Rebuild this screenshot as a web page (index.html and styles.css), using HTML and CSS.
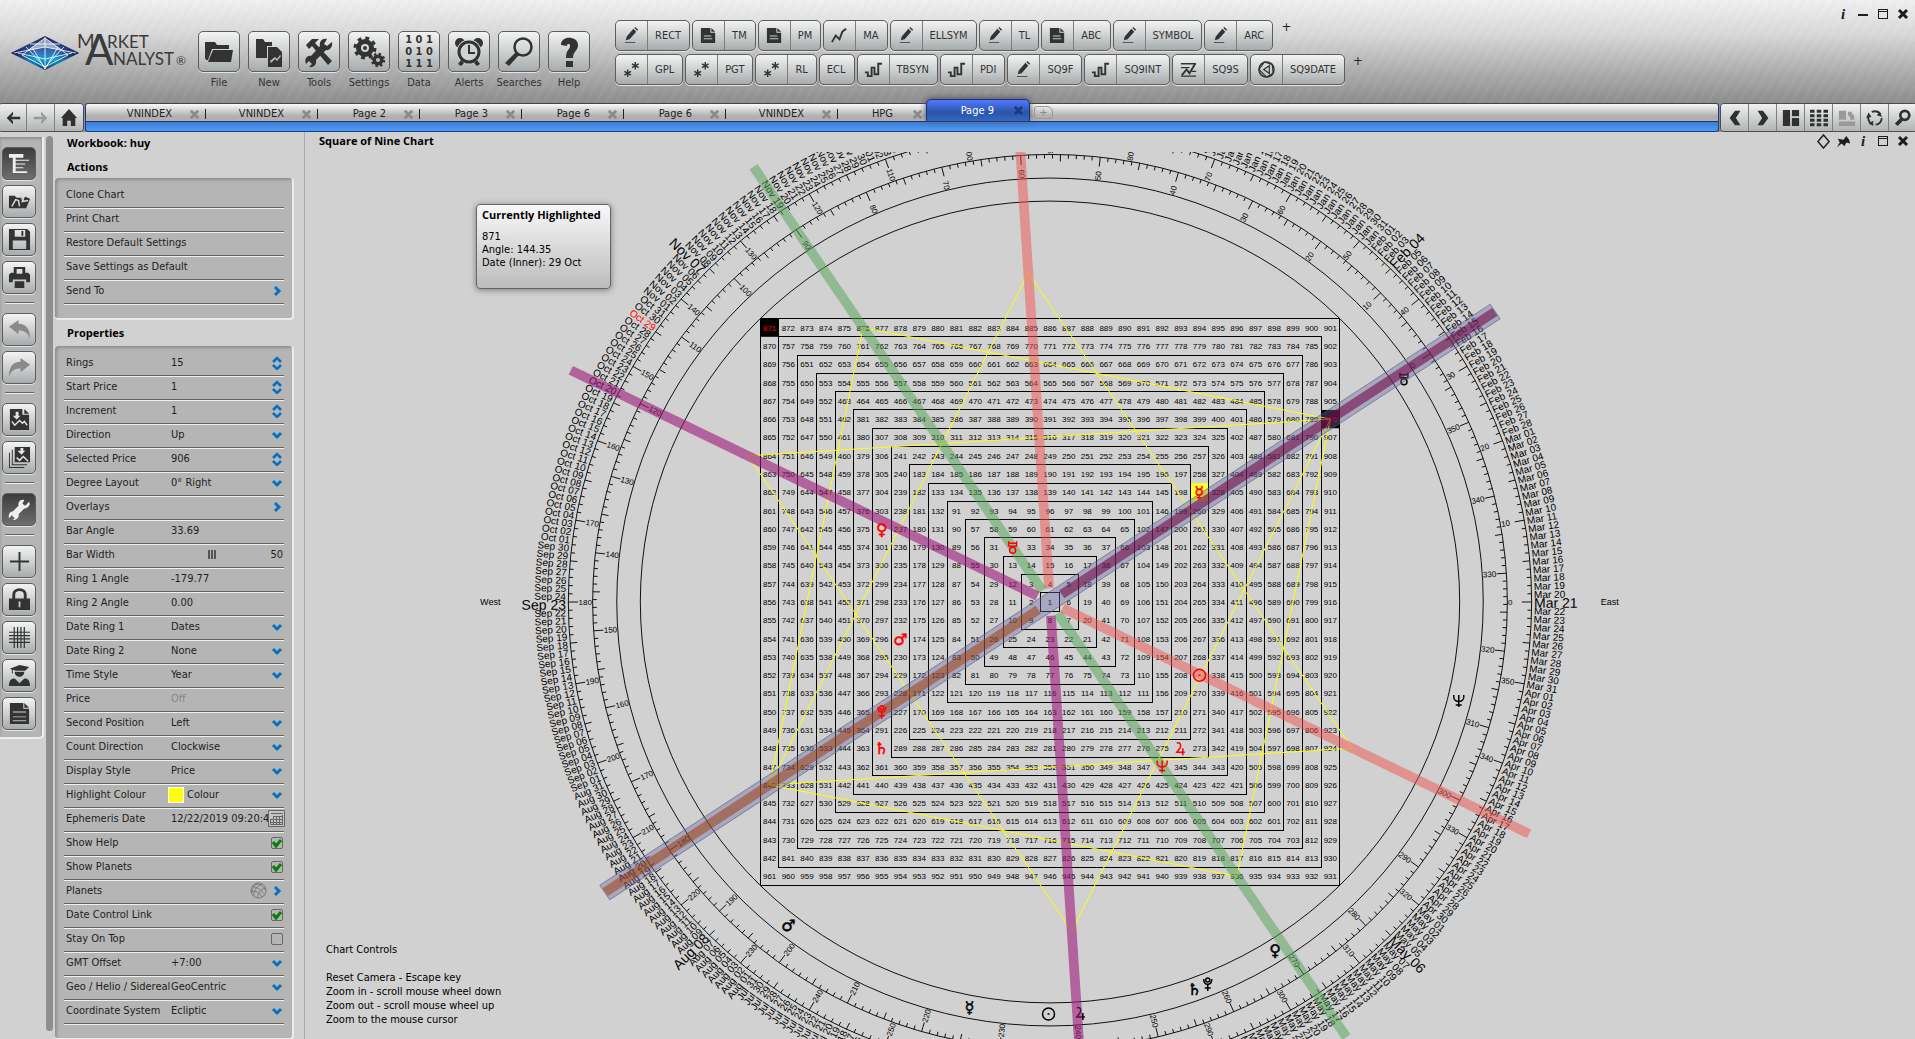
FILE: index.html
```html
<!DOCTYPE html>
<html lang="en">
<head>
<meta charset="utf-8">
<title>Market Analyst - Square of Nine Chart</title>
<link rel="stylesheet" href="styles.css">
</head>
<body>
<svg class="sprite" aria-hidden="true">
  <defs>
    <symbol id="folder" viewBox="0 0 32 32"><path d="M2 6h10l2 3h12v4H9L5 24H3L2 22z"/><path d="M10 14h20l-2 12H5z"/></symbol>
    <symbol id="new" viewBox="0 0 32 32"><path d="M3 3h7l2 3h7v4h-5v12H3z"/><path fill-rule="evenodd" d="M15 11h9l5 5v15H15zm2 14l1 2 4-4 2 2 4-5-1-1-3 4-2-2z"/></symbol>
    <symbol id="tools" viewBox="0 0 32 32"><path d="M3 9l6-6h7l-4 4 17 18-4 4L9 10l-3 3z"/><path d="M29 6l-5 4-3-2 3-5c-5-1-8 3-7 7L8 20c-4-1-7 3-5 8l3-3 3 3-3 3c5 1 8-3 7-7l10-10c4 1 7-4 6-8z"/></symbol>
    <symbol id="gears" viewBox="0 0 32 32"><circle cx="12" cy="12" r="6.500" fill="none" stroke="currentColor" stroke-width="5"/><circle cx="12" cy="12" r="9.500" fill="none" stroke="currentColor" stroke-width="4" stroke-dasharray="3.700 3.760"/><circle cx="12" cy="12" r="2"/><circle cx="25" cy="24" r="3.800" fill="none" stroke="currentColor" stroke-width="3.500"/><circle cx="25" cy="24" r="6" fill="none" stroke="currentColor" stroke-width="2.500" stroke-dasharray="2.300 2.410"/></symbol>
    <symbol id="clock" viewBox="0 0 32 32"><circle cx="7" cy="7" r="5"/><circle cx="25" cy="7" r="5"/><circle cx="16" cy="16" r="12.500" fill="#d0d3d4"/><circle cx="16" cy="16" r="10" fill="none" stroke="currentColor" stroke-width="3"/><path d="M15 9h2v7h5v2h-7zM8 24l3 3-3 3-3-2zm16 0l-3 3 3 3 3-2z"/></symbol>
    <symbol id="search" viewBox="0 0 32 32"><circle cx="20" cy="11" r="8.500" fill="none" stroke="currentColor" stroke-width="2.500"/><path d="M13 16l3 3L6 30l-4-3z"/></symbol>
    <symbol id="help" viewBox="0 0 32 32"><path d="M8 9c0-10 17-9 17 0 0 6-5 6-5 13h-7c0-9 4-8 4-12 0-3-3-3-3 0zM13 25h7v6h-7z"/></symbol>
    <symbol id="pencil" viewBox="0 0 20 20"><path d="M5 11l7-8 3 3-7 8-4 1zM13 2l1-1 3 3-1 1zM3 17h11v1H3z"/></symbol>
    <symbol id="doc" viewBox="0 0 20 20"><path fill-rule="evenodd" d="M2 2h10v5h5v11H2zm3 8v1h8v-1zm0 3v1h9v-1z"/><path d="M13 2l4 4h-4z"/></symbol>
    <symbol id="zig" viewBox="0 0 20 20"><path fill="none" stroke="currentColor" stroke-width="2" d="M2 17l4-7 4 4 3-8 4-3"/></symbol>
    <symbol id="stars" viewBox="0 0 20 20"><path fill="none" stroke="currentColor" stroke-width="1.500" d="M6 10v8M2.500 12l7 4M9.500 12l-7 4M14 2v8M10.500 4l7 4M17.500 4l-7 4"/></symbol>
    <symbol id="step" viewBox="0 0 20 20"><path fill="none" stroke="currentColor" stroke-width="2" d="M1 13h3v4h4V8h3v7h4V4h4"/></symbol>
    <symbol id="levels" viewBox="0 0 20 20"><path fill="none" stroke="currentColor" stroke-width="1.500" d="M2 4h16M2 8h9M2 17h16M13 12h5"/><path fill="none" stroke="currentColor" stroke-width="2" d="M3 16l5-6 3 4 6-10"/></symbol>
    <symbol id="wheel" viewBox="0 0 20 20"><circle cx="10" cy="10" r="8" fill="none" stroke="currentColor" stroke-width="1.500"/><path fill="none" stroke="currentColor" stroke-width="1.250" d="M7 10l6-4v8zM2 10l6-8 8 3 1 9-7 4z"/></symbol>
    <symbol id="back" viewBox="0 0 20 20"><path d="M10 3l-7 7 7 7v-3.500L8 11.500h10v-3H8l2-2z"/></symbol>
    <symbol id="fwd" viewBox="0 0 20 20"><path d="M10 3l7 7-7 7v-3.500l2-2H2v-3h10l-2-2z"/></symbol>
    <symbol id="home" viewBox="0 0 20 20"><path d="M10 0l9 10h-2v9h-5v-6H8v6H3v-9H1z"/></symbol>
    <symbol id="prev" viewBox="0 0 20 20"><path d="M10 2h6l-5 8 5 8h-6l-6-8z"/></symbol>
    <symbol id="next" viewBox="0 0 20 20"><path d="M10 2H4l5 8-5 8h6l6-8z"/></symbol>
    <symbol id="layout" viewBox="0 0 20 20"><path d="M1 1h8v18H1zM11 1h8v7h-8zM11 10h8v9h-8z"/></symbol>
    <symbol id="cells" viewBox="0 0 20 20"><path fill="none" stroke="currentColor" stroke-width="3.500" stroke-dasharray="5 2.500" d="M0 2.500h20M0 7.500h20M0 12.500h20M0 17.500h20"/></symbol>
    <symbol id="swap" viewBox="0 0 20 20"><path d="M1 2h8v10H1zM1 14h18v5H1zM11 3h5l-1 1 2 3 1-1v6h-5l1-1-2-4-1 1z"/></symbol>
    <symbol id="cycle" viewBox="0 0 20 20"><circle cx="10" cy="10" r="7.500" fill="none" stroke="currentColor" stroke-width="2" stroke-dasharray="11 4.700"/><path d="M15 3l3 6-6-2zM8 19l-5-3 5-3zM0 10l3-6 3 5z"/></symbol>
    <symbol id="loupe" viewBox="0 0 20 20"><circle cx="12" cy="7" r="5" fill="none" stroke="currentColor" stroke-width="3"/><path d="M7 10l3 3-6 6-3-3z"/></symbol>
    <symbol id="tree" viewBox="0 0 24 24"><path d="M1 2h15v4H1zM5 6h3v16H5zM8 8h14v1H8zM8 12h10v1H8zM8 16h8v1H8zM8 20h12v2H8z"/></symbol>
    <symbol id="open" viewBox="0 0 24 24"><path d="M1 6h6l2 2h5v3l4-4 5 2-4 10H1z"/><path fill="none" stroke="#d8dadb" stroke-width="1.500" d="M4 17l4-7 3 1 1 6M13 3c4 1 4 5 2 9l6-1"/></symbol>
    <symbol id="save" viewBox="0 0 24 24"><path fill-rule="evenodd" d="M1 1h19l3 3v19H1zm6 1v7h11V2zm7 1h2v5h-2zM5 13v9h14v-9z"/></symbol>
    <symbol id="print" viewBox="0 0 24 24"><path fill-rule="evenodd" d="M6 1h12v6h3l2 2v8h-4v-3H5v3H1V9l2-2h3zm3 2v5h6V3zM7 16h10v7H7z"/></symbol>
    <symbol id="undo" viewBox="0 0 24 24"><path d="M1 9l10-7v4c8 0 12 6 12 15-3-6-6-8-12-8v4z"/></symbol>
    <symbol id="redo" viewBox="0 0 24 24"><path d="M23 9L13 2v4C5 6 1 12 1 21c3-6 6-8 12-8v4z"/></symbol>
    <symbol id="chartpage" viewBox="0 0 24 24"><path d="M2 1h13v6h7v16H2z"/><path d="M17 1l5 5h-5z"/><path fill="none" stroke="#e2e4e5" stroke-width="1.500" d="M4 14l3 4 5-5 3 3 2-2 3 4"/><path fill="#e2e4e5" d="M8 4h3v4h2l-4 4-4-4h3z"/></symbol>
    <symbol id="chartpages" viewBox="0 0 24 24"><path d="M7 1h16v16H7zM4 4h1v15h15v1H4zM1 7h1v15h15v1H1z"/><path fill="none" stroke="#e2e4e5" stroke-width="1.500" d="M9 12l3 3 4-4 5 5"/><path fill="#e2e4e5" d="M13 2h3v3h2l-4 4-4-4h3z"/></symbol>
    <symbol id="wrench" viewBox="0 0 24 24"><path d="M22 4l-4 4-3-2 2-4c-4-1-7 2-6 6l-6 6c-3 0-5 3-4 7l3-3 3 3-2 2c4 0 7-3 6-6l6-6c4 0 7-4 5-7z"/></symbol>
    <symbol id="plus" viewBox="0 0 24 24"><path d="M11 2h2v9h9v2h-9v9h-2v-9H2v-2h9z"/></symbol>
    <symbol id="lock" viewBox="0 0 24 24"><path fill="none" stroke="currentColor" stroke-width="3" d="M6 12V7c0-7 12-7 12 0v5"/><path fill-rule="evenodd" d="M1 11h22v12H1zm10 3v6h2v-6z"/></symbol>
    <symbol id="mesh" viewBox="0 0 24 24"><path fill="none" stroke="currentColor" stroke-width="1.250" d="M1 6.500h22M1 10h22M1 13.500h22M1 17h22M6.500 1v22M10 1v22M13.500 1v22M17 1v22"/></symbol>
    <symbol id="grad" viewBox="0 0 24 24"><path d="M2 5l10-4 10 2-4 4H8l-3-1v4H4V6zM7 8h10c0 7-10 7-10 0zM1 23c0-7 3-8 6-8l5 5 5-5c3 0 6 1 6 8z"/></symbol>
    <symbol id="page" viewBox="0 0 24 24"><path fill-rule="evenodd" d="M2 1h14v6h6v16H2zm3 9v1h14v-1zm0 5v1h14v-1zm0 4v1h14v-1z"/><path d="M17 1l5 5h-5z"/></symbol>
    <symbol id="pin" viewBox="0 0 16 16"><path d="M2 5l6 1 3-4 3 4 1 4-4-1-2 4-3-3-5 4 3-5z"/></symbol>
    <symbol id="diamond" viewBox="0 0 16 16"><path fill="none" stroke="currentColor" stroke-width="1.500" d="M8 1l6 7-6 7-6-7z"/></symbol>
    <symbol id="win" viewBox="0 0 12 12"><path fill-rule="evenodd" d="M1 1h10v10H1zm1 3v6h8V4zm0-2v1h8V2z"/></symbol>
    <symbol id="cross" viewBox="0 0 12 12"><path fill="none" stroke="currentColor" stroke-width="3" d="M2 2l8 8M10 2l-8 8"/></symbol>
    <symbol id="min" viewBox="0 0 12 12"><path d="M1 6h10v2H1z"/></symbol>
    <symbol id="right" viewBox="0 0 10 12"><path fill="none" stroke="currentColor" stroke-width="3" d="M2 2l4 4-4 4"/></symbol>
    <symbol id="down" viewBox="0 0 12 10"><path fill="none" stroke="currentColor" stroke-width="3" d="M2 3l4 4 4-4"/></symbol>
    <symbol id="spin" viewBox="0 0 10 14"><path fill="none" stroke="currentColor" stroke-width="2.500" d="M1 6l4-4 4 4M1 9l4 4 4-4"/></symbol>
    <symbol id="calendar" viewBox="0 0 17 17"><path fill="none" stroke="currentColor" d="M.5.500h16v16H.5zM3 3.500h12M5.500 6v9M8.500 6v9M11.500 6v9M14.500 5v10M5 6.500h10M3 9.500h12M3 12.500h12M2.500 9v5.500h12"/></symbol>
    <symbol id="globe" viewBox="0 0 18 18"><circle cx="9" cy="9" r="8" fill="none" stroke="currentColor"/><path fill="none" stroke="currentColor" d="M2 5c5 0 10 3 14 9M1 10c5-1 9 1 12 6M6 2c5 0 8 3 11 7M13 2C7 4 4 9 4 15M16 6c-5 2-8 6-8 11M8 1C4 4 2 7 2 12"/></symbol>
    <symbol id="tick" viewBox="0 0 12 12"><path fill="none" stroke="currentColor" stroke-width="3" d="M2 5l3 4 5-6"/></symbol>
  </defs>
</svg>

<header class="header">
  <svg class="logo" width="180" height="46" viewBox="0 0 180 46" role="img" aria-label="Market Analyst">
    <defs>
      <linearGradient id="gem" x1="0" y1="0" x2="0" y2="1"><stop offset="0" stop-color="#1b1b5a"/><stop offset=".45" stop-color="#3a6cae"/><stop offset=".7" stop-color="#12a3d8"/><stop offset="1" stop-color="#0b2f66"/></linearGradient>
      <linearGradient id="gem-edge"><stop offset="0" stop-color="#101048"/><stop offset=".35" stop-color="#101048" stop-opacity="0"/><stop offset=".65" stop-color="#101048" stop-opacity="0"/><stop offset="1" stop-color="#101048"/></linearGradient>
    </defs>
    <path d="M1 22L35 5l34 17-34 17z" fill="url(#gem)"/>
    <path fill="#fff" fill-opacity=".5" d="M35 7L16 20l19-4 19 4z"/>
    <path d="M1 22L35 5l34 17-34 17z" fill="url(#gem-edge)"/>
    <path fill="none" stroke="#fff" stroke-opacity=".8" d="M35 6v32M4 22l31-6 31 6M16 16l19 20 19-20M35 7L12 24l23 12 23-12zM8 22l27 6 27-6M20 13h30M35 38L22 16M35 38l13-22"/>
    <text class="logo-text" x="67" y="17" font-size="19">M</text>
    <text class="logo-text" x="75" y="34" font-size="42">A</text>
    <text class="logo-text" x="97" y="17" font-size="17">RKET</text>
    <text class="logo-text" x="103" y="34" font-size="17">NALYST</text>
    <text class="logo-text" x="166" y="34" font-size="12">®</text>
  </svg>
  <nav class="menu" aria-label="Main">
    <button class="menu-item"><span class="tile"><svg><use href="#folder"/></svg></span>File</button>
    <button class="menu-item"><span class="tile"><svg><use href="#new"/></svg></span>New</button>
    <button class="menu-item"><span class="tile"><svg><use href="#tools"/></svg></span>Tools</button>
    <button class="menu-item"><span class="tile"><svg><use href="#gears"/></svg></span>Settings</button>
    <button class="menu-item"><span class="tile bits">1 0 1<br>0 1 0<br>1 1 1</span>Data</button>
    <button class="menu-item"><span class="tile"><svg><use href="#clock"/></svg></span>Alerts</button>
    <button class="menu-item"><span class="tile"><svg><use href="#search"/></svg></span>Searches</button>
    <button class="menu-item"><span class="tile"><svg><use href="#help"/></svg></span>Help</button>
  </nav>
  <div class="shortcuts">
    <div class="shortcut-row">
      <button class="shortcut"><svg><use href="#pencil"/></svg><span>RECT</span></button>
      <button class="shortcut"><svg><use href="#doc"/></svg><span>TM</span></button>
      <button class="shortcut"><svg><use href="#doc"/></svg><span>PM</span></button>
      <button class="shortcut"><svg><use href="#zig"/></svg><span>MA</span></button>
      <button class="shortcut"><svg><use href="#pencil"/></svg><span>ELLSYM</span></button>
      <button class="shortcut"><svg><use href="#pencil"/></svg><span>TL</span></button>
      <button class="shortcut"><svg><use href="#doc"/></svg><span>ABC</span></button>
      <button class="shortcut"><svg><use href="#pencil"/></svg><span>SYMBOL</span></button>
      <button class="shortcut"><svg><use href="#pencil"/></svg><span>ARC</span></button>
      <button class="add">+</button>
    </div>
    <div class="shortcut-row">
      <button class="shortcut"><svg><use href="#stars"/></svg><span>GPL</span></button>
      <button class="shortcut"><svg><use href="#stars"/></svg><span>PGT</span></button>
      <button class="shortcut"><svg><use href="#stars"/></svg><span>RL</span></button>
      <button class="shortcut"><span>ECL</span></button>
      <button class="shortcut"><svg><use href="#step"/></svg><span>TBSYN</span></button>
      <button class="shortcut"><svg><use href="#step"/></svg><span>PDI</span></button>
      <button class="shortcut"><svg><use href="#pencil"/></svg><span>SQ9F</span></button>
      <button class="shortcut"><svg><use href="#step"/></svg><span>SQ9INT</span></button>
      <button class="shortcut"><svg><use href="#levels"/></svg><span>SQ9S</span></button>
      <button class="shortcut"><svg><use href="#wheel"/></svg><span>SQ9DATE</span></button>
      <button class="add">+</button>
    </div>
  </div>
  <div class="window-buttons">
    <button class="info" aria-label="About">i</button>
    <button aria-label="Minimise"><svg><use href="#min"/></svg></button>
    <button aria-label="Maximise"><svg><use href="#win"/></svg></button>
    <button aria-label="Close"><svg><use href="#cross"/></svg></button>
  </div>
</header>

<div class="navbar">
  <div class="nav-group left">
    <button aria-label="Back"><svg><use href="#back"/></svg></button>
    <button aria-label="Forward" disabled><svg><use href="#fwd"/></svg></button>
    <button aria-label="Home"><svg><use href="#home"/></svg></button>
  </div>
  <div class="tabs">
    <div class="tab-row">
      <button class="tab wide first">VNINDEX<svg><use href="#cross"/></svg></button>
      <button class="tab wide">VNINDEX<svg><use href="#cross"/></svg></button>
      <button class="tab">Page 2<svg><use href="#cross"/></svg></button>
      <button class="tab">Page 3<svg><use href="#cross"/></svg></button>
      <button class="tab">Page 6<svg><use href="#cross"/></svg></button>
      <button class="tab">Page 6<svg><use href="#cross"/></svg></button>
      <button class="tab wide">VNINDEX<svg><use href="#cross"/></svg></button>
      <button class="tab narrow">HPG<svg><use href="#cross"/></svg></button>
      <button class="tab active">Page 9<svg><use href="#cross"/></svg></button>
      <button class="new-tab" aria-label="New tab">+</button>
    </div>
  </div>
  <div class="nav-group right">
    <button aria-label="Previous"><svg><use href="#prev"/></svg></button>
    <button aria-label="Next"><svg><use href="#next"/></svg></button>
    <button aria-label="Layout"><svg><use href="#layout"/></svg></button>
    <button aria-label="Tiles"><svg><use href="#cells"/></svg></button>
    <button aria-label="Swap" disabled><svg><use href="#swap"/></svg></button>
    <button aria-label="Refresh"><svg><use href="#cycle"/></svg></button>
    <button aria-label="Find"><svg><use href="#loupe"/></svg></button>
  </div>
</div>

<main class="workspace">
  <aside class="toolbar">
    <button class="on" aria-label="Panel"><svg><use href="#tree"/></svg></button>
    <button aria-label="Open"><svg><use href="#open"/></svg></button>
    <button aria-label="Save"><svg><use href="#save"/></svg></button>
    <button aria-label="Print"><svg><use href="#print"/></svg></button>
    <hr>
    <button aria-label="Undo" disabled><svg><use href="#undo"/></svg></button>
    <button aria-label="Redo" disabled><svg><use href="#redo"/></svg></button>
    <hr>
    <button aria-label="Chart to page"><svg><use href="#chartpage"/></svg></button>
    <button aria-label="Chart to pages"><svg><use href="#chartpages"/></svg></button>
    <hr>
    <button class="on" aria-label="Properties"><svg><use href="#wrench"/></svg></button>
    <hr>
    <button aria-label="Add"><svg><use href="#plus"/></svg></button>
    <button aria-label="Lock"><svg><use href="#lock"/></svg></button>
    <button aria-label="Grid"><svg><use href="#mesh"/></svg></button>
    <button aria-label="Learn"><svg><use href="#grad"/></svg></button>
    <button aria-label="Notes"><svg><use href="#page"/></svg></button>
  </aside>
  <div class="scroll-thumb"></div>
  <section class="sidebar">
    <h1>Workbook: huy</h1>
    <h2>Actions</h2>
    <div class="box">
      <button class="row">Clone Chart</button>
      <button class="row">Print Chart</button>
      <button class="row">Restore Default Settings</button>
      <button class="row">Save Settings as Default</button>
      <button class="row">Send To<svg class="go"><use href="#right"/></svg></button>
    </div>
    <h2>Properties</h2>
    <form class="box">
      <div class="row"><label for="rings">Rings</label><input id="rings" value="15"><svg class="spin"><use href="#spin"/></svg></div>
      <div class="row"><label for="start">Start Price</label><input id="start" value="1"><svg class="spin"><use href="#spin"/></svg></div>
      <div class="row"><label for="inc">Increment</label><input id="inc" value="1"><svg class="spin"><use href="#spin"/></svg></div>
      <div class="row"><label for="dir">Direction</label><select id="dir"><option>Up</option></select><svg class="drop"><use href="#down"/></svg></div>
      <div class="row"><label for="sel">Selected Price</label><input id="sel" value="906"><svg class="spin"><use href="#spin"/></svg></div>
      <div class="row"><label for="deg">Degree Layout</label><select id="deg"><option>0° Right</option></select><svg class="drop"><use href="#down"/></svg></div>
      <button type="button" class="row">Overlays<svg class="go"><use href="#right"/></svg></button>
      <div class="row"><label for="angle">Bar Angle</label><input id="angle" value="33.69"></div>
      <div class="row"><label for="width">Bar Width</label><input id="width" type="range" min="0" max="100" value="50"><output for="width">50</output></div>
      <div class="row"><label for="r1">Ring 1 Angle</label><input id="r1" value="-179.77"></div>
      <div class="row"><label for="r2">Ring 2 Angle</label><input id="r2" value="0.00"></div>
      <div class="row"><label for="d1">Date Ring 1</label><select id="d1"><option>Dates</option></select><svg class="drop"><use href="#down"/></svg></div>
      <div class="row"><label for="d2">Date Ring 2</label><select id="d2"><option>None</option></select><svg class="drop"><use href="#down"/></svg></div>
      <div class="row"><label for="time">Time Style</label><select id="time"><option>Year</option></select><svg class="drop"><use href="#down"/></svg></div>
      <div class="row"><label for="price">Price</label><input id="price" value="Off" disabled></div>
      <div class="row"><label for="pos">Second Position</label><select id="pos"><option>Left</option></select><svg class="drop"><use href="#down"/></svg></div>
      <div class="row"><label for="count">Count Direction</label><select id="count"><option>Clockwise</option></select><svg class="drop"><use href="#down"/></svg></div>
      <div class="row"><label for="disp">Display Style</label><select id="disp"><option>Price</option></select><svg class="drop"><use href="#down"/></svg></div>
      <div class="row"><label for="col">Highlight Colour</label><span class="swatch"></span><select id="col"><option>Colour</option></select><svg class="drop"><use href="#down"/></svg></div>
      <div class="row"><label for="eph">Ephemeris Date</label><input id="eph" value="12/22/2019 09:20:4"><svg class="cal"><use href="#calendar"/></svg></div>
      <div class="row"><label for="shelp">Show Help</label><input id="shelp" type="checkbox" checked><svg class="tick"><use href="#tick"/></svg></div>
      <div class="row"><label for="splan">Show Planets</label><input id="splan" type="checkbox" checked><svg class="tick"><use href="#tick"/></svg></div>
      <button type="button" class="row">Planets<svg class="globe"><use href="#globe"/></svg><svg class="go"><use href="#right"/></svg></button>
      <div class="row"><label for="link">Date Control Link</label><input id="link" type="checkbox" checked><svg class="tick"><use href="#tick"/></svg></div>
      <div class="row"><label for="top">Stay On Top</label><input id="top" type="checkbox"></div>
      <div class="row"><label for="gmt">GMT Offset</label><select id="gmt"><option>+7:00</option></select><svg class="drop"><use href="#down"/></svg></div>
      <div class="row"><label for="geo">Geo / Helio / Sidereal</label><select id="geo"><option>GeoCentric</option></select><svg class="drop"><use href="#down"/></svg></div>
      <div class="row"><label for="coord">Coordinate System</label><select id="coord"><option>Ecliptic</option></select><svg class="drop"><use href="#down"/></svg></div>
    </form>
  </section>
  <section class="chart-pane">
    <div class="chart-head">
      <h2>Square of Nine Chart</h2>
      <div class="window-buttons">
        <button aria-label="Link"><svg class="big"><use href="#diamond"/></svg></button>
        <button aria-label="Pin"><svg class="big"><use href="#pin"/></svg></button>
        <button class="info" aria-label="Info">i</button>
        <button aria-label="Maximise"><svg><use href="#win"/></svg></button>
        <button aria-label="Close"><svg><use href="#cross"/></svg></button>
      </div>
    </div>
    <svg id="chart" class="chart" role="img" aria-label="Square of Nine"></svg>
    <div class="tip">
      <h3>Currently Highlighted</h3>
      <p>871<br>Angle: 144.35<br>Date (Inner): 29 Oct</p>
    </div>
    <div class="controls-help">
      <p>Chart Controls</p>
      <p>Reset Camera - Escape key<br>Zoom in - scroll mouse wheel down<br>Zoom out - scroll mouse wheel up<br>Zoom to the mouse cursor</p>
    </div>
  </section>
</main>
<script src="chart.js"></script>
</body>
</html>
```
FILE: styles.css
```css
* { box-sizing: border-box; }
html, body { height: 100%; }
body {
  margin: 0;
  display: flex;
  flex-direction: column;
  overflow: hidden;
  background: #d1d1d1;
  color: #222;
  font: 11px/14px "DejaVu Sans Condensed", "DejaVu Sans", sans-serif;
}
button, input, select, output { font: inherit; color: inherit; }
button { background: none; border: 0; padding: 0; margin: 0; }
svg { fill: currentColor; flex: none; }
.sprite { position: absolute; width: 0; height: 0; }
h1, h2, h3, p { margin: 0; font-size: 11px; line-height: 14px; color: #000; }
h1, h2, h3 { font-family: "Open Sans", "Noto Sans", sans-serif; font-weight: 700; }

/* header */
.header {
  display: flex;
  flex: none;
  height: 103px;
  background:
    repeating-linear-gradient(120deg, rgba(255, 255, 255, .06) 0 1px, transparent 1px 5px, rgba(0, 0, 0, .02) 5px 6px, transparent 6px 9px),
    linear-gradient(#f0f0f0, #d6d6d6 35%, #b2b2b2 65%, #8d8d8d);
}
.logo { margin: 31px 4px 0 10px; overflow: visible; }
.logo-text { font-family: Lato, sans-serif; fill: #3a3a3a; }
.menu { display: flex; margin-top: 31px; }
.menu-item { width: 50px; display: flex; flex-direction: column; align-items: center; gap: 4px; line-height: 14px; white-space: nowrap; height: 60px; color: #333; }
.tile, .shortcut, .toolbar button {
  background: linear-gradient(#f2f4f4, #cfd1d1 50%, #a7abad);
  border: 1px solid #5b5d5e;
  border-radius: 5px;
  box-shadow: 0 1px 0 #e4e4e4;
  color: #333;
}
.tile { width: 42px; height: 41px; display: flex; align-items: center; justify-content: center; flex: none; }
.tile svg { width: 32px; height: 32px; }
.bits { font: bold 11px/12px "DejaVu Sans Condensed", sans-serif; white-space: nowrap; }
.shortcuts { display: flex; flex-direction: column; gap: 3px; margin: 20px 0 0 21px; }
.shortcut-row { display: flex; gap: 2px; align-items: flex-start; }
.shortcut { display: flex; align-items: stretch; height: 31px; }
.shortcut svg { width: 32px; height: 29px; padding: 4px 6px; border-right: 1px solid #7a7c7d; }
.shortcut span { padding: 0 8px 0 7px; line-height: 29px; }
.add { margin-left: 6px; width: 10px; font-size: 13px; }
.window-buttons { display: flex; gap: 8px; margin: 8px 6px 0 auto; height: 12px; }
.window-buttons button { width: 12px; height: 12px; display: flex; align-items: center; justify-content: center; color: #1c1c1c; }
.window-buttons svg { width: 12px; height: 12px; }
.window-buttons .big { width: 15px; height: 15px; }
.window-buttons .info { font: italic bold 15px/12px "Liberation Serif", serif; }

/* navigation and tabs */
.navbar { display: flex; flex: none; height: 29px; background: #8c8c8c; }
.nav-group { display: flex; border: 1px solid #4c4c4c; border-radius: 4px; overflow: hidden; }
.nav-group.left { margin-left: -2px; }
.nav-group.right { margin-right: -3px; }
.nav-group button { width: 28px; display: flex; align-items: center; justify-content: center; border-right: 1px solid #808080; background: linear-gradient(#f0f0f0, #b0b4b5); color: #303030; }
.nav-group button:last-child { border: 0; }
.nav-group svg { width: 18px; height: 18px; }
.nav-group button:disabled { color: #999; }
.tabs { flex: 1; margin: 0 1px; border: 1px solid #1c3b8c; border-top-color: #444; border-radius: 3px; background: linear-gradient(#3f7cd2, #4d9cf6) 0 18px / 100% 9px no-repeat, linear-gradient(#fafafa, #b0b0b0 12px); }
.tab-row { display: flex; height: 18px; border-bottom: 1px solid #1f2f7a; }
.tab { width: 102px; display: flex; align-items: center; justify-content: flex-end; gap: 17px; padding-right: 5px; border-right: 1px solid #222; height: 10px; margin-top: 5px; color: #222; white-space: nowrap; }
.tab svg { width: 11px; height: 11px; color: #8a8a8a; }
.tab.wide { width: 112px; }
.tab.first { width: 120px; }
.tab.narrow { width: 88px; padding-right: 3px; gap: 19px; border: 0; }
.tab.active { width: 104px; height: 22px; margin-top: -5px; border: 1px solid #1f2f7a; border-bottom: 0; border-radius: 5px 5px 0 0; background: linear-gradient(#5078ff, #2b55a8 60%, #3468c0); color: #fff; box-shadow: 0 -1px 6px #555; line-height: 24px; gap: 19px; }
.tab.active svg { color: #1d3a80; }
.new-tab { width: 19px; height: 13px; margin: 2px 4px; line-height: 10px; border: 1px solid #999; border-radius: 3px 6px 3px 3px; color: #888; }

/* workspace */
.workspace { flex: 1; display: flex; min-height: 0; }
.toolbar {
  width: 44px;
  align-self: flex-start;
  margin-top: 5px;
  padding: 10px 0 7px 2px;
  display: flex;
  flex-direction: column;
  gap: 5px;
  background: #b5b5b5;
  border: solid #eee;
  border-width: 0 2px 2px 0;
  border-radius: 0 0 5px 0;
  box-shadow: inset 0 2px 3px #8f8f8f;
}
.toolbar button { width: 34px; height: 33px; display: flex; align-items: center; justify-content: center; }
.toolbar svg { width: 23px; height: 23px; }
.toolbar button:disabled { color: #8a8a8a; }
.toolbar .on { background: linear-gradient(#3c3c3c, #6e6e6e); color: #eee; }
.toolbar hr { width: 29px; height: 2px; margin: 3px 0 4px 3px; border: 0; border-top: 1px solid #666; background: #eee; }
.scroll-thumb { flex: none; width: 7px; margin: 4px 2px 8px; border-radius: 4px; background: #8f8f8f; }
.sidebar { width: 250px; flex: none; border-right: 1px solid #aaa; }
.sidebar h1, .sidebar h2 { padding-left: 12px; }
.sidebar h1 { margin-top: 4px; }
.sidebar h2 { margin-top: 10px; }
.box {
  width: 239px;
  margin: 4px 0 0;
  padding: 6px 8px 14px 9px;
  background: #b5b5b5;
  border: solid #ececec;
  border-width: 0 2px 2px 0;
  border-radius: 4px;
  box-shadow: inset 2px 2px 3px #8f8f8f;
}
.sidebar .box + h2 { margin-top: 6px; }
form.box { margin-top: 6px; }
.row {
  width: 100%;
  height: 24px;
  display: flex;
  align-items: center;
  padding: 0 1px 2px 2px;
  text-align: left;
  white-space: nowrap;
  border-bottom: 1px solid #626262;
  box-shadow: 0 1px 0 #f0f0f0;
}
.row label { width: 104px; flex: none; }
.row input, .row select { flex: 1; min-width: 0; height: 18px; padding: 0; margin: 0 0 0 1px; border: 0; background: none; appearance: none; outline: 0; }
.row input:disabled { color: #888; }
.row output { width: 30px; text-align: right; }
.row .go { width: 10px; height: 12px; margin-left: auto; color: #0a70c0; }
.row .drop { width: 12px; height: 10px; color: #0a70c0; }
.row .spin { width: 10px; height: 14px; margin-right: 1px; color: #0a70c0; }
.row .cal { width: 17px; height: 17px; margin-right: -2px; color: #666; background: #c4c4c4; }
.row .globe { width: 17px; height: 17px; margin-left: auto; color: #777; }
.row .globe + .go { margin-left: 6px; }
.swatch { width: 16px; height: 16px; margin: 0 2px 0 -2px; background: #ff0; border: 1px solid #fff; }
.row input[type="checkbox"] { flex: none; width: 12px; height: 12px; margin-left: auto; border: 1px solid #666; border-radius: 2px; }
.row .tick { width: 12px; height: 12px; margin-left: -12px; color: #0a7d0a; pointer-events: none; }
.row input[type="range"]::-webkit-slider-thumb { appearance: none; width: 8px; height: 9px; background: repeating-linear-gradient(90deg, #555 0 2px, transparent 2px 3px); }

/* chart */
.chart-pane { position: relative; flex: 1; min-width: 0; display: flex; flex-direction: column; }
.chart-head { display: flex; height: 20px; flex: none; }
.chart-head h2 { padding: 2px 0 0 14px; }
.chart-head .window-buttons { margin-top: 3px; }
.chart { flex: 1; width: 100%; min-height: 0; overflow: hidden; font: 8px "Liberation Sans", Arial, sans-serif; fill: #000; }
.chart .line { fill: none; stroke: #000; shape-rendering: crispEdges; }
.chart .ring { fill: none; stroke: #111; }
.chart .aspect { fill: none; stroke: #ff0; stroke-width: 1; }
.chart .beam { fill: #6868a8; fill-opacity: .4; stroke: #555a78; stroke-opacity: .6; }
.chart .cell, .chart .mid { text-anchor: middle; }
.chart .mid { font-size: 9px; }
.chart .date { font-size: 10px; }
.chart .major { font-size: 14px; }
.chart .hot { fill: #f00; }
.chart .planet { font: 16px "DejaVu Sans", sans-serif; text-anchor: middle; stroke: #000; stroke-width: .5; }
.chart .planet.hot { stroke: #f00; }
.chart .glyph { fill: none; stroke: #000; stroke-width: 1.500; }
.chart .glyph.hot { fill: none; stroke: #f00; }
.tip {
  position: absolute;
  left: 171px;
  top: 72px;
  width: 135px;
  height: 85px;
  padding: 3px 5px;
  border: 1px solid #666;
  border-radius: 4px;
  background: linear-gradient(#f8f8f8, #bcbcbc);
  box-shadow: 0 1px 6px #777;
}
.tip h3 { white-space: nowrap; }
.tip p { margin-top: 8px; line-height: 13px; }
.controls-help { position: absolute; left: 21px; bottom: 12px; }
.controls-help p + p { margin-top: 14px; }
```
FILE: chart.js
```js
const NS = 'http://www.w3.org/2000/svg';
const svg = document.getElementById('chart');

// Chart centre and cell size; cells are slightly wider than tall.
const CX = 745, CY = 450, SX = 18.69, SY = 18.29;
const RINGS = 15, BAR = 33.69;
const R1 = 21.92, R2 = 23.18, R3 = 24.47, R4 = 25.77;

const px = u => CX + u * SX;
const py = v => CY - v * SY;
const rad = a => a * Math.PI / 180;
const polar = (a, r) => [px(r * Math.cos(rad(a))), py(r * Math.sin(rad(a)))];

function add(name, attrs, text) {
  const el = document.createElementNS(NS, name);
  for (const k in attrs) el.setAttribute(k, attrs[k]);
  if (text !== undefined) el.textContent = text;
  svg.appendChild(el);
  return el;
}

// Text along a radius, kept upright on the left half.
function radial(text, a, r, cls, size) {
  const [x, y] = polar(a, r);
  const flip = Math.cos(rad(a)) < 0;
  const rot = flip ? 180 - a : -a;
  add('text', {
    class: cls,
    'text-anchor': flip ? 'end' : 'start',
    transform: `translate(${x} ${y}) rotate(${rot})`,
    y: size * 0.36
  }, text);
}

// Value -> cell of the spiral
const cells = new Map([[1, [0, 0]]]);
let n = 1;
for (let k = 1; k <= RINGS; k++) {
  for (let v = 1 - k; v <= k; v++) cells.set(++n, [-k, v]);
  for (let u = 1 - k; u <= k; u++) cells.set(++n, [u, k]);
  for (let v = k - 1; v >= -k; v--) cells.set(++n, [k, v]);
  for (let u = k - 1; u >= -k; u--) cells.set(++n, [u, -k]);
}

// Planet symbols drawn as strokes; the rest come from the font.
const GLYPHS = {
  pluto: 'M-4 -5c0 7 8 7 8 0M0 0v7M-3 4h6M-2 -4a2 2 0 1 0 4 0a2 2 0 1 0 -4 0',
  uranus: 'M-4 -6v5M4 -6v5M-4 -4h8M-4 -1h8M-3 3a3 3 0 1 0 6 0a3 3 0 1 0 -6 0',
  neptune: 'M-5 -6v2c0 6 10 6 10 0v-2M0 -6v12M-3 4h6',
  jupiter: 'M-4 -5c3 -2 5 2 3 5l-3 4h8M2 0v7',
  sun: 'M-6 0a6 6 0 1 0 12 0a6 6 0 1 0 -12 0M-1 0h2'
};
function planet(sym, x, y, cls) {
  if (GLYPHS[sym]) {
    add('path', { class: 'glyph ' + cls, d: GLYPHS[sym], transform: `translate(${x} ${y})` });
  } else {
    add('text', { class: 'planet ' + cls, x, y: y + 6 }, sym);
  }
}

const planets = { 302: '♀', 32: 'uranus', 259: '☿', 231: '♂', 292: 'pluto', 290: '♄', 269: 'sun', 274: 'jupiter', 346: 'neptune' };

function cellRect(value, fill) {
  const [u, v] = cells.get(value);
  add('rect', { x: px(u - 0.5), y: py(v + 0.5), width: SX, height: SY, fill });
}
cellRect(871, '#000');
cellRect(906, '#000');
cellRect(259, '#ff3');

for (let k = 0; k <= RINGS; k++) {
  const h = k + 0.5;
  add('rect', { class: 'line', x: px(-h), y: py(h), width: 2 * h * SX, height: 2 * h * SY });
}
for (const [value, [u, v]] of cells) {
  if (!planets[value]) add('text', { class: value === 871 || value === 906 ? 'cell hot' : 'cell', x: px(u), y: py(v) + 3 }, value);
}

// Rings and degree scales
for (const r of [R1, R2, R3, R4]) add('ellipse', { class: 'ring', cx: CX, cy: CY, rx: r * SX, ry: r * SY });
let ticks = '';
for (const [r, off] of [[R4, 0], [R3, BAR]]) {
  for (let d = 0; d < 360; d++) {
    const len = d % 10 === 0 ? 0.52 : d % 5 === 0 ? 0.38 : 0.22;
    const [x1, y1] = polar(d + off, r), [x2, y2] = polar(d + off, r - len);
    ticks += `M${x1.toFixed(1)} ${y1.toFixed(1)}L${x2.toFixed(1)} ${y2.toFixed(1)}`;
    if (d % 10 === 0) radial(d, d + off, r - 1.26, '', 8);
  }
}
add('path', { class: 'ring', d: ticks });

// Dates placed by solar longitude
const MONTHS = ['Jan', 'Feb', 'Mar', 'Apr', 'May', 'Jun', 'Jul', 'Aug', 'Sep', 'Oct', 'Nov', 'Dec'];
const MAJOR = ['Mar 21', 'May 06', 'Jun 22', 'Aug 08', 'Sep 23', 'Nov 07', 'Dec 22', 'Feb 04'];
for (let i = 0; i < 365; i++) {
  const t = Date.UTC(2019, 0, 1 + i);
  const d = (t - Date.UTC(2000, 0, 1, 12)) / 864e5;
  const g = rad(357.528 + 0.9856003 * d);
  const lon = 280.46 + 0.9856474 * d + 1.915 * Math.sin(g) + 0.02 * Math.sin(2 * g);
  const day = new Date(t);
  const label = MONTHS[day.getUTCMonth()] + ' ' + String(day.getUTCDate()).padStart(2, '0');
  const major = MAJOR.includes(label);
  const cls = major ? 'major' : label === 'Oct 29' ? 'date hot' : 'date';
  radial(label, -lon, 25.9, cls, major ? 14 : 10);
}
add('text', { class: 'mid', x: px(-29.95), y: CY + 3 }, 'West');
add('text', { class: 'mid', x: px(29.95), y: CY + 3 }, 'East');

// Planets on the inner ring
for (const [sym, a] of [['uranus', 32.8], ['neptune', -13.9], ['♀', -57.7], ['pluto', -68], ['♄', -69.9], ['jupiter', -85.8], ['sun', -90.2], ['☿', -101], ['♂', -128.4]]) {
  planet(sym, ...polar(a, 22.53), '');
}

// Aspect figures
for (const set of [[0, 90, 180, 270], [0, 120, 240], [60, 180, 300]]) {
  add('polygon', { class: 'aspect', points: set.map(a => polar(BAR + a, 18.03).join()).join(' ') });
}

// Straight bar between two radii at an angle
function bar(a, from, to, half, attrs) {
  const c = Math.cos(rad(a)), s = Math.sin(rad(a));
  const pts = [[from, half], [to, half], [to, -half], [from, -half]]
    .map(([r, w]) => [px(r * c - w * s), py(r * s + w * c)].join());
  add('polygon', { points: pts.join(' '), ...attrs });
}
bar(BAR, -28.63, 28.63, 0.48, { class: 'beam' });
const bars = [
  [0, '#70003d', 0.55], [60, '#ef5350', 0.5], [90, '#53a353', 0.5], [120, '#9c1878', 0.6],
  [180, '#9e3800', 0.5], [240, '#9c1878', 0.6], [270, '#53a353', 0.5], [300, '#ef5350', 0.5]
];
for (const [a, fill, op] of bars) bar(BAR + a, 0.75, 28.6, 0.26, { fill, 'fill-opacity': op });
for (const value in planets) {
  const [u, v] = cells.get(Number(value));
  planet(planets[value], px(u), py(v), 'hot');
}
```
